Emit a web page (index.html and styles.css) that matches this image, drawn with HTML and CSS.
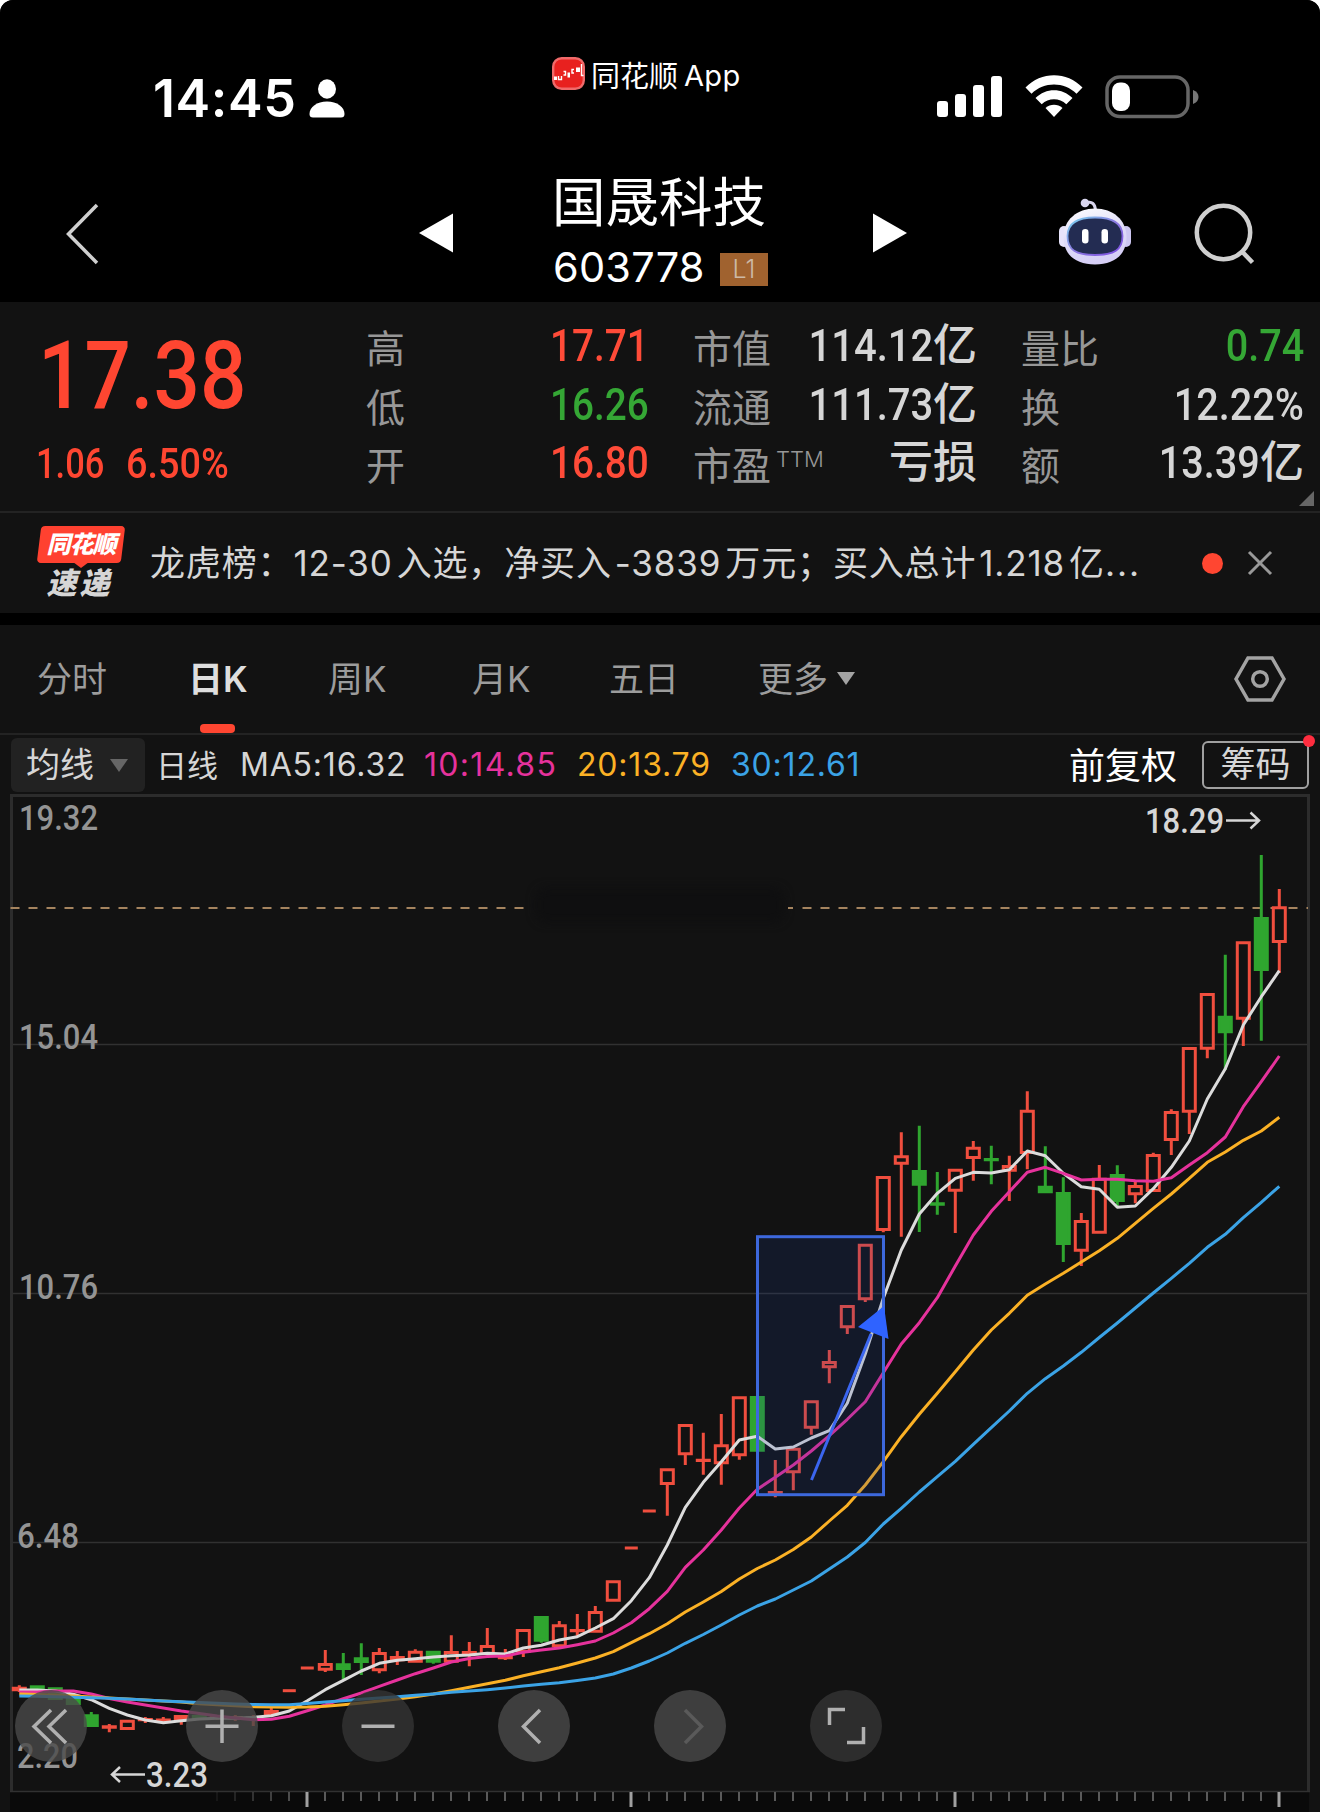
FILE: index.html
```html
<!DOCTYPE html>
<html lang="zh-CN">
<head>
    <meta charset="UTF-8">
    <meta name="viewport" content="width=device-width, initial-scale=1.0">
    <title>国晟科技 603778</title>
    <link rel="stylesheet" href="styles.css">
</head>
<body>
<div class="phone">

    <!-- 状态栏 -->
    <header class="status-bar">
        <span class="clock">14:45</span>
        <svg class="person" width="36" height="40" viewBox="0 0 36 40">
            <ellipse cx="18" cy="10" rx="9" ry="9.7"/>
            <path d="M0.5 35C0.5 28 8 22.5 18 22.5S35.5 28 35.5 35Q35.5 38.5 32 38.5H4Q0.5 38.5 0.5 35Z"/>
        </svg>
        <div class="app-tag">
            <svg width="33" height="33" viewBox="0 0 33 33">
                <rect x="1.2" y="1.2" width="30.6" height="30.6" rx="8.5" fill="#e8211f" stroke="#f06a6a" stroke-width="2.4"/>
                <path d="M2 19.5h3v3.500h-3zM15.500 15.500h2.500v5h-2.500zM24 10.500h4v4.500h-4z" fill="#fff"/>
                <path d="M6.5 19v3.500h3v-3.500M11.500 14.500h2v3.500h-2M22 12.500h-2v3.500h2M29.500 7v11.500h2" fill="none" stroke="#fff" stroke-width="1.4"/>
            </svg>
            <span class="app-cn">同花顺</span><span class="app-en">App</span>
        </div>
        <svg class="signal" width="66" height="42" viewBox="0 0 66 42">
            <rect x="0" y="25" width="11" height="16" rx="3"/>
            <rect x="18" y="18" width="11" height="23" rx="3"/>
            <rect x="36" y="9" width="11" height="32" rx="3"/>
            <rect x="54" y="0" width="11" height="41" rx="3"/>
        </svg>
        <svg class="wifi" width="58" height="43" viewBox="0 0 58 43">
            <path d="M0.5 12.5C16-4 42-4 57.5 12.5L51.5 18.8C39 6.5 19 6.5 6.5 18.8Z"/>
            <path d="M10.5 23C21 12.5 37 12.5 47.5 23L41.3 29.2C34.5 22.7 23.5 22.7 16.7 29.2Z"/>
            <path d="M20.5 33C25.5 28.6 32.5 28.6 37.5 33L29 42Z"/>
        </svg>
        <svg class="battery" width="94" height="44" viewBox="0 0 94 44">
            <rect x="2" y="2" width="81" height="39.5" rx="13" fill="none" stroke="#666" stroke-width="3.5"/>
            <path d="M88 15q5.5 2 5.5 7t-5.5 7z" fill="#777"/>
            <rect x="7" y="7.5" width="18" height="28.5" rx="8" fill="#fff"/>
        </svg>
    </header>

    <!-- 标题栏 -->
    <nav class="nav">
        <svg class="back" width="34" height="62" viewBox="0 0 34 62"><path d="M32 2L3.5 31L32 60"/></svg>
        <svg class="prev" width="34" height="40" viewBox="0 0 34 40"><path d="M0 20L34 0.5V39.5Z"/></svg>
        <div class="stock">
            <h1>国晟科技</h1>
            <div class="code"><span class="code-num">603778</span><span class="level">L1</span></div>
        </div>
        <svg class="next" width="34" height="40" viewBox="0 0 34 40"><path d="M34 20L0 0.5V39.5Z"/></svg>
        <svg class="robot" width="74" height="68" viewBox="0 0 74 68">
            <defs>
                <linearGradient id="head" x1="0" y1="0" x2="0.3" y2="1">
                    <stop offset="0" stop-color="#fff"/><stop offset="0.55" stop-color="#dfdcf8"/><stop offset="1" stop-color="#d6cff6"/>
                </linearGradient>
                <linearGradient id="rim" x1="0" y1="0" x2="1" y2="1">
                    <stop offset="0" stop-color="#79d7ef"/><stop offset="0.5" stop-color="#8a78e0"/><stop offset="1" stop-color="#7c4ce0"/>
                </linearGradient>
            </defs>
            <path d="M28 5Q37 2 37.5 13" fill="none" stroke="#d9d6ee" stroke-width="3"/>
            <circle cx="27" cy="5" r="4.3" fill="#d9d6ee"/>
            <rect x="1" y="28" width="10" height="21" rx="5" fill="#e6e3fa"/>
            <rect x="63" y="28" width="10" height="21" rx="5" fill="#cdc7f2"/>
            <path d="M37 10.5C55 10.5 68.5 22 68.5 39C68.5 57 56 66.5 37 66.5S5.5 57 5.5 39C5.5 22 19 10.5 37 10.5Z" fill="url(#head)"/>
            <path d="M37 19.5C55 19.5 64.5 25 64.5 38C64.5 52 56 57 37 57S9.5 52 9.5 38C9.5 25 19 19.5 37 19.5Z" fill="#232c52" stroke="url(#rim)" stroke-width="1.8"/>
            <rect x="24" y="31" width="6.5" height="14.5" rx="3.2" fill="#fff"/>
            <rect x="43.5" y="31" width="6.5" height="14.5" rx="3.2" fill="#fff"/>
        </svg>
        <svg class="search" width="62" height="62" viewBox="0 0 62 62"><circle cx="29.5" cy="29.5" r="26.7"/><path d="M48 48.5L58.5 59.5"/></svg>
    </nav>

    <!-- 行情 -->
    <section class="quote">
        <div class="price-box">
            <div class="price"><span class="din">17.38</span></div>
            <div class="change"><span class="din chg">1.06</span><span class="din pct">6.50%</span></div>
        </div>
        <dl class="stats stats-a">
            <dt>高</dt><dd class="up"><span class="din">17.71</span></dd>
            <dt>低</dt><dd class="down"><span class="din">16.26</span></dd>
            <dt>开</dt><dd class="up"><span class="din">16.80</span></dd>
        </dl>
        <dl class="stats stats-b">
            <dt>市值</dt><dd><span class="din">114.12</span><b>亿</b></dd>
            <dt>流通</dt><dd><span class="din">111.73</span><b>亿</b></dd>
            <dt>市盈<sup>TTM</sup></dt><dd><b>亏损</b></dd>
        </dl>
        <dl class="stats stats-c">
            <dt>量比</dt><dd class="down"><span class="din">0.74</span></dd>
            <dt>换</dt><dd><span class="din">12.22%</span></dd>
            <dt>额</dt><dd><span class="din">13.39</span><b>亿</b></dd>
        </dl>
        <i class="corner"></i>
    </section>

    <!-- 资讯条 -->
    <section class="news">
        <div class="news-logo">
            <span class="logo-top">同花顺</span>
            <span class="logo-bottom">速递</span>
        </div>
        <p class="news-text">龙虎榜：<em class="first">12-30</em>入选，净买入<em>-3839</em>万元；买入总计<em>1.218</em>亿<span class="more">...</span></p>
        <i class="dot"></i>
        <svg class="close" width="26" height="26" viewBox="0 0 26 26"><path d="M2 2L24 24M24 2L2 24"/></svg>
    </section>

    <!-- 周期切换 -->
    <section class="tabs">
        <span class="tab t1">分时</span>
        <span class="tab t2 active">日K</span>
        <span class="tab t3">周K</span>
        <span class="tab t4">月K</span>
        <span class="tab t5">五日</span>
        <span class="tab t6">更多<i class="caret"></i></span>
        <svg class="setting" width="52" height="46" viewBox="0 0 52 46">
            <path d="M14 2H38L50 23L38 44H14L2 23Z"/><circle cx="26" cy="23" r="7.3"/>
        </svg>
    </section>

    <section class="ma-row">
        <div class="ma-select">均线<i class="caret"></i></div>
        <span class="period">日线</span>
        <span class="ma ma5">MA5:16.32</span>
        <span class="ma ma10">10:14.85</span>
        <span class="ma ma20">20:13.79</span>
        <span class="ma ma30">30:12.61</span>
        <span class="adjust">前复权</span>
        <span class="chips">筹码</span>
    </section>

    <!-- K线图 -->
    <section class="chart">
        <svg id="kline" width="1320" height="1018" viewBox="0 794 1320 1018">
            <rect x="10" y="1792" width="1299" height="20" fill="#0a0a0a"/>
            <path class="grid" d="M11 1044.5H1308M11 1293.5H1308M11 1542.5H1308"/>
            <path class="frame" d="M11.5 1791V795.5H1308.5V1791"/>
            <path class="grid base" d="M10 1791.5H1310"/>
            <rect class="smudge" x="536" y="888" width="248" height="34" rx="10"/>
            <path class="last-price" d="M10.5 908H528"/>
            <path class="last-price" d="M788 908H793M802.5 908H1308"/>
            <g id="candles"></g>
            <g id="averages"></g>
            <g id="ticks"></g>
            <g class="axis">
                <text x="19" y="830" textLength="79">19.32</text>
                <text x="19" y="1049" textLength="79">15.04</text>
                <text x="19" y="1299" textLength="79">10.76</text>
                <text x="17" y="1548" textLength="62">6.48</text>
                <text x="17" y="1767.5" textLength="61">2.20</text>
            </g>
            <g class="mark">
                <text x="1145" y="833" textLength="79">18.29</text>
                <path d="M1226 820.5H1259M1250.5 812.5L1259 820.5L1250.5 828.5"/>
                <text x="146" y="1787" textLength="62">3.23</text>
                <path d="M145 1774.5H112M120 1767L112 1774.5L120 1782"/>
            </g>
            <rect class="pick" x="757.5" y="1236.7" width="126" height="258"/>
            <path class="pick-line" d="M811.5 1480L871 1334"/>
            <path class="pick-head" d="M884 1306L858 1327L888.5 1339Z"/>
        </svg>

        <div class="controls">
            <button><svg viewBox="0 0 72 72"><path d="M36 20L19 36.5L36 53M51 20L34 36.5L51 53"/></svg></button>
            <button><svg viewBox="0 0 72 72"><path d="M36 19.5V53M19.5 36.2H52.5"/></svg></button>
            <button class="dim"><svg viewBox="0 0 72 72"><path d="M19.5 36.2H52.5"/></svg></button>
            <button><svg viewBox="0 0 72 72"><path d="M42 20L25.5 36.5L42 53"/></svg></button>
            <button class="off"><svg viewBox="0 0 72 72"><path d="M31 20L47.5 36.5L31 53"/></svg></button>
            <button class="dim"><svg viewBox="0 0 72 72"><path d="M19.5 35V19.5H35M53.5 37V52.5H37"/></svg></button>
        </div>
    </section>
</div>
<script src="kline.js"></script>
</body>
</html>
```
FILE: styles.css
```css
* {
    box-sizing: border-box;
}
body {
    margin: 0;
    background: #fff;
    font-family: Inter, "Noto Sans CJK SC", sans-serif;
    color: #d6d6d6;
}
.phone {
    width: 1320px;
    height: 1812px;
    background: #121212;
    border-radius: 13px 13px 0 0;
    overflow: hidden;
}
i, em {
    font-style: normal;
}
svg {
    display: block;
    flex: none;
}

/* status bar */
.status-bar {
    display: flex;
    align-items: flex-start;
    height: 160px;
    background: #000;
    color: #fff;
    fill: #fff;
}
.clock {
    width: 156px;
    margin: 67px 0 0 153px;
    font-size: 52px;
    line-height: 64px;
    font-weight: 600;
    letter-spacing: 0.6px;
}
.person {
    margin-top: 79px;
}
.app-tag {
    display: flex;
    align-items: center;
    width: 385px;
    margin: 57px 0 0 207px;
    height: 33px;
    white-space: nowrap;
}
.app-cn {
    margin: 1px 0 0 6px;
    font-size: 29px;
}
.app-en {
    margin: 4px 0 0 6px;
    font-size: 29px;
    letter-spacing: 0.3px;
}
.signal {
    margin-top: 76px;
}
.wifi {
    margin: 75px 0 0 22px;
}
.battery {
    margin: 75px 0 0 22px;
}

/* nav */
.nav {
    display: flex;
    align-items: flex-start;
    height: 142px;
    background: #000;
    color: #fff;
    fill: #fff;
}
.back {
    margin: 43px 0 0 65px;
    fill: none;
    stroke: #cfcfcf;
    stroke-width: 3.5;
}
.prev {
    margin: 53px 0 0 320px;
}
.stock {
    width: 221px;
    margin-left: 99px;
}
.stock h1 {
    margin: 6px 0 0;
    font-size: 53.5px;
    line-height: 74px;
    font-weight: 400;
    white-space: nowrap;
}
.code {
    display: flex;
    align-items: center;
    height: 50px;
    margin-top: 2px;
}
.code-num {
    width: 167px;
    margin-left: 1px;
    font-size: 41.5px;
    line-height: 50px;
    letter-spacing: 0.2px;
}
.level {
    width: 48px;
    height: 33px;
    margin-top: 4px;
    background: #a0622f;
    color: #cdb9a6;
    font-size: 25px;
    line-height: 33px;
    text-align: center;
    font-weight: 300;
}
.next {
    margin: 53px 0 0 100px;
}
.robot {
    margin: 38px 0 0 151px;
}
.search {
    margin: 43px 0 0 62px;
    fill: none;
    stroke: #cfcfcf;
    stroke-width: 4.5;
}

/* quote */
.quote {
    position: relative;
    display: flex;
    height: 211px;
    border-bottom: 2px solid #232323;
}
.din {
    display: inline-block;
    font-family: Roboto, sans-serif;
    font-weight: 500;
    transform: scaleX(0.86);
    transform-origin: 100% 50%;
}
.price-box {
    width: 366px;
    color: #ff4631;
}
.price-box .din {
    transform-origin: 0 50%;
}
.price {
    margin: 16px 0 0 38px;
    font-size: 95px;
    line-height: 112px;
}
.change {
    display: flex;
    margin: 7px 0 0 36px;
    font-size: 42px;
    line-height: 50px;
}
.change .chg {
    width: 90px;
    transform: scaleX(0.82);
}
.change .pct {
    transform: scaleX(0.9);
}
.stats {
    display: grid;
    grid-template-columns: 90px 1fr;
    grid-auto-rows: 58.5px;
    margin: 17px 0 0;
    line-height: 58px;
}
.stats-a {
    width: 283px;
}
.stats-b {
    width: 284px;
    margin-left: 44px;
}
.stats-b .din {
    transform: scaleX(0.89);
}
.stats-c {
    width: 283px;
    margin-left: 44px;
}
.stats-c .din {
    transform: scaleX(0.88);
}
dt {
    padding-top: 1px;
    color: #979797;
    font-size: 39px;
    white-space: nowrap;
    font-weight: 400;
}
dt sup {
    font-size: 22px;
    font-weight: 300;
    line-height: 1;
    margin-left: 5px;
    vertical-align: 13px;
}
dd {
    margin: -3px 0 0;
    font-size: 45px;
    text-align: right;
    white-space: nowrap;
}
dd b {
    font-size: 44px;
    font-weight: 500;
    line-height: 1;
}
.up {
    color: #ff4b38;
}
.down {
    color: #35a735;
}
.corner {
    position: absolute;
    right: 6px;
    bottom: 5px;
    border-left: 15px solid transparent;
    border-bottom: 15px solid #666;
}

/* news */
.news {
    display: flex;
    align-items: center;
    height: 112px;
    border-bottom: 12px solid #000;
}
.news-logo {
    display: flex;
    flex-direction: column;
    align-items: center;
    width: 88px;
    margin: 0 0 1px 37px;
    font-style: italic;
    font-weight: 900;
    white-space: nowrap;
}
.logo-top {
    position: relative;
    z-index: 0;
    width: 88px;
    height: 37px;
    font-size: 24px;
    line-height: 38px;
    text-align: center;
    color: #fff;
    letter-spacing: -1px;
}
.logo-top::before {
    content: "";
    position: absolute;
    z-index: -1;
    inset: 0 2px;
    background: #ff4130;
    border-radius: 4px;
    transform: skewX(-7deg);
}
.logo-top::after {
    content: "";
    position: absolute;
    left: 36px;
    top: 36px;
    border: 8px solid transparent;
    border-top: 6px solid #ff4130;
    border-bottom: 0;
}
.logo-bottom {
    margin: 4px 3px 0 0;
    font-size: 30px;
    line-height: 32px;
    letter-spacing: 3px;
}
.news-text {
    width: 1052px;
    margin: 0 0 0 25px;
    font-size: 35px;
    line-height: 50px;
    letter-spacing: 0.85px;
    white-space: nowrap;
}
.news-text em {
    margin: 0 4px 0 3px;
}
.news-text .first {
    margin-left: 0;
}
.news-text .more {
    letter-spacing: 2px;
}
.dot {
    width: 21px;
    height: 21px;
    border-radius: 50%;
    background: #ff4631;
}
.close {
    margin-left: 24px;
    stroke: #999;
    stroke-width: 3;
}

/* tabs */
.tabs {
    display: flex;
    align-items: center;
    height: 110px;
    border-bottom: 2px solid #232323;
    font-size: 35px;
    color: #9c9c9c;
}
.tab {
    position: relative;
    display: flex;
    align-items: center;
    height: 108px;
    padding-bottom: 6px;
    white-space: nowrap;
}
.t1 { width: 151px; margin-left: 37px; }
.t2 { width: 140px; }
.t3 { width: 144px; }
.t4 { width: 137px; }
.t5 { width: 149px; }
.t6 { width: 476px; }
.tab.active {
    color: #dedede;
    font-weight: 600;
}
.tab.active::after {
    content: "";
    position: absolute;
    left: 12px;
    bottom: 0;
    width: 35px;
    height: 9px;
    border-radius: 4px;
    background: #ff4631;
}
.caret {
    width: 0;
    height: 0;
    border: 9px solid transparent;
    border-top: 13px solid #a3a3a3;
    border-bottom: 0;
}
.tab .caret {
    margin: 5px 0 0 9px;
}
.setting {
    fill: none;
    stroke: #a3a3a3;
    stroke-width: 3.5;
}

/* MA row */
.ma-row {
    display: flex;
    align-items: center;
    height: 59px;
    font-size: 32px;
    white-space: nowrap;
}
.ma-select {
    display: flex;
    align-items: center;
    width: 134px;
    height: 54px;
    margin-left: 11px;
    padding-left: 15px;
    border-radius: 6px;
    background: #222;
    font-size: 34px;
    line-height: 52px;
}
.ma-select .caret {
    margin: 1px 0 0 16px;
    border-top-color: #666;
}
.period {
    width: 84px;
    margin: -3px 0 0 11px;
    font-size: 31px;
}
.ma {
    letter-spacing: 0.8px;
}
.ma5 { width: 184px; }
.ma10 { width: 153px; color: #e6329c; letter-spacing: 1.3px; }
.ma20 { width: 154px; color: #fbb125; }
.ma30 { width: 338px; color: #3ba3e6; }
.adjust {
    width: 133px;
    margin-top: -4px;
    font-size: 36px;
    color: #fff;
}
.chips {
    position: relative;
    width: 107px;
    height: 48px;
    border: 2px solid #a0a0a0;
    border-radius: 6px;
    font-size: 35px;
    line-height: 43px;
    text-align: center;
}
.chips::after {
    content: "";
    position: absolute;
    right: -8px;
    top: -8px;
    width: 12px;
    height: 12px;
    border-radius: 50%;
    background: #ff2d3f;
}

/* chart */
.chart {
    position: relative;
    height: 1018px;
}
.grid {
    stroke: #313131;
    stroke-width: 1.5;
}
.frame {
    fill: none;
    stroke: #2c2c2c;
    stroke-width: 3;
}
.smudge {
    fill: #0f0f10;
    filter: blur(5px);
}
.last-price {
    stroke: #a5845f;
    stroke-width: 2.2;
    stroke-dasharray: 9 9;
}
.candle-up {
    fill: none;
    stroke: #f04e3e;
    stroke-width: 3;
}
.candle-down {
    fill: #2fa52f;
    stroke: #2fa52f;
    stroke-width: 3;
}
.average {
    fill: none;
    stroke-width: 3;
    stroke-linejoin: round;
}
.tick {
    stroke: #5a5a5a;
    stroke-width: 2;
}
.tick-major {
    stroke: #a0a0a0;
    stroke-width: 3;
}
.axis text,
.mark text {
    font-family: Roboto, sans-serif;
    font-size: 35.5px;
    font-weight: 500;
    fill: #949494;
}
.mark text {
    fill: #d6d6d6;
}
.mark path {
    fill: none;
    stroke: #d6d6d6;
    stroke-width: 2.5;
}
.pick {
    fill: rgba(30, 65, 160, 0.17);
    stroke: #3d68dc;
    stroke-width: 3;
}
.pick-line {
    stroke: #3b66f0;
    stroke-width: 3;
}
.pick-head {
    fill: #2f63ff;
}
.controls {
    position: absolute;
    left: 15px;
    top: 896px;
    display: flex;
    gap: 84px;
}
.controls button {
    width: 72px;
    height: 72px;
    padding: 0;
    border: 0;
    border-radius: 50%;
    background: rgba(74, 74, 74, 0.8);
}
.controls button:first-child {
    margin-right: 15px;
}
.controls .dim {
    background: rgba(52, 52, 52, 0.8);
}
.controls path {
    fill: none;
    stroke: #b0b0b0;
    stroke-width: 3.5;
}
.controls .off path {
    stroke: #5a5a5a;
}
```
FILE: kline.js
```js
const STEP = 18;
const FIRST_X = 19.3;
const NS = 'http://www.w3.org/2000/svg';

// [方向, 最高, 实体上沿, 实体下沿, 最低]，方向 1 涨 / 0 跌 / 2 一字板
const candles = [
    [1, 1685.3, 1686.7, 1691.3, 1692], [0, 1685.3, 1685.3, 1689.5, 1689.5], [0, 1687.3, 1687.3, 1700, 1700],
    [0, 1698, 1698, 1705, 1705], [0, 1712, 1714.3, 1727, 1727], [1, 1724, 1725.3, 1728.7, 1732.3],
    [1, 1719.7, 1719.7, 1730, 1730], [1, 1717, 1718, 1721, 1723], [1, 1717, 1718.5, 1722, 1723],
    [1, 1715, 1715, 1720, 1724.7], [0, 1714, 1715, 1719, 1720], [1, 1715, 1716, 1719, 1720],
    [1, 1715, 1716, 1719, 1721], [1, 1715, 1716, 1720, 1726], [1, 1706, 1710, 1715.3, 1716],
    [2, 0, 1690.7], [2, 0, 1668], [1, 1650, 1663, 1670.7, 1672],
    [0, 1653, 1663.3, 1670, 1679.3], [0, 1643.3, 1657.3, 1663, 1675], [1, 1648, 1652, 1671.3, 1673.3],
    [1, 1651, 1656, 1661.3, 1665], [1, 1649.3, 1650.7, 1662.7, 1662.7], [0, 1650.7, 1650.7, 1662.7, 1663.7],
    [1, 1635.3, 1651, 1662.7, 1662.7], [1, 1642, 1651, 1654.3, 1666.3], [1, 1628, 1645, 1655, 1655],
    [1, 1649, 1656, 1659, 1660], [1, 1629, 1629, 1652.7, 1657], [0, 1616, 1616, 1641.7, 1642.7],
    [1, 1621, 1624.3, 1647.3, 1649], [1, 1614, 1629, 1632.3, 1636.7], [1, 1606, 1611, 1632.7, 1632.7],
    [1, 1580.3, 1580.3, 1601.7, 1601.7], [2, 0, 1548], [2, 0, 1511],
    [1, 1468.3, 1468.3, 1485, 1515.7], [1, 1424, 1424, 1455.3, 1465], [1, 1432.7, 1458.7, 1462, 1474.7],
    [1, 1414, 1444.3, 1464.3, 1484.7], [1, 1396.3, 1396.3, 1456.3, 1459.7], [0, 1396, 1396, 1451.7, 1451.7],
    [1, 1460, 1491, 1495.3, 1497.3], [1, 1447.7, 1447.7, 1473.3, 1490.3], [1, 1400.3, 1400.3, 1428.7, 1434.7],
    [1, 1350, 1361, 1368.3, 1383.3], [1, 1305, 1305, 1328.3, 1334], [1, 1243.7, 1243.7, 1300.3, 1302],
    [1, 1176, 1176, 1231, 1232.3], [1, 1132.3, 1155.3, 1164.7, 1236.7], [0, 1125.7, 1170, 1185.7, 1232],
    [0, 1172, 1202.3, 1205.7, 1214.7], [1, 1168.7, 1168.7, 1191.7, 1233], [1, 1141, 1146.7, 1159, 1180.7],
    [0, 1145.7, 1158, 1161, 1184.3], [1, 1155.7, 1165, 1171.7, 1201], [1, 1091.3, 1109.7, 1154, 1169.3],
    [0, 1146.3, 1185.7, 1193.3, 1193.3], [0, 1177.3, 1192, 1245, 1262], [1, 1213, 1220, 1251.7, 1266],
    [1, 1165, 1177.7, 1233.7, 1233.7], [0, 1165.3, 1174, 1202, 1206], [1, 1181.3, 1185, 1195.3, 1203.3],
    [1, 1152.7, 1154, 1192, 1192], [1, 1109.3, 1111, 1141, 1155], [1, 1047, 1047, 1112.7, 1134],
    [1, 993, 993, 1049.7, 1058.3], [0, 954.7, 1015.7, 1033.3, 1070], [1, 941.3, 941.3, 1019.7, 1046],
    [0, 855, 917, 971, 1040.7], [1, 889, 906.3, 943, 973]
];

const averages = {
    '#dcdcdc': [
        1690, 1690, 1691, 1694.3, 1699.7, 1708.3, 1715, 1720, 1722.7, 1720.7, 1719, 1718.3, 1718.3, 1717.3, 1715.7,
        1711, 1700.7, 1689.7, 1680.3, 1671, 1663.3, 1660.3, 1658.7, 1657, 1655.7, 1655, 1653.3, 1654, 1648, 1645.3,
        1640, 1636.7, 1628, 1618.7, 1600.7, 1577.7, 1545, 1507.3, 1482.3, 1461.7, 1440, 1436.3, 1449, 1447, 1438,
        1430.7, 1403.3, 1354, 1298.3, 1250, 1214, 1193.3, 1178.3, 1172.3, 1173, 1169.7, 1151, 1155.7, 1173.3, 1186.7,
        1189.3, 1207.3, 1206, 1188.7, 1167.3, 1141, 1099, 1068.7, 1025, 996.7, 970.7
    ],
    '#e6329c': [
        1692, 1692, 1691, 1691, 1694, 1698.5, 1702, 1705, 1708, 1711, 1713.5, 1716, 1718, 1719.7, 1719.3,
        1716.3, 1710.7, 1705, 1698.7, 1693, 1686.3, 1680, 1673.7, 1668, 1662, 1658.5, 1656.5, 1656, 1652.3, 1650,
        1648, 1644.7, 1641, 1633, 1622.7, 1608.7, 1591.3, 1567.3, 1550, 1530, 1508, 1489.3, 1477.3, 1465, 1451,
        1435.7, 1419.3, 1401.7, 1372.7, 1344, 1322.7, 1297.7, 1266, 1235, 1211.3, 1191.7, 1172.3, 1167.3, 1173.3, 1180,
        1179.3, 1179.3, 1180.7, 1181.3, 1177.7, 1165, 1152.7, 1137, 1106.7, 1081.7, 1056
    ],
    '#fbb125': [
        1694, 1694.5, 1695, 1696, 1697, 1698, 1699, 1700, 1701, 1702, 1703.7, 1704.7, 1705.7, 1706.7, 1707,
        1707.3, 1707, 1706.3, 1704.7, 1703, 1701, 1699, 1696.7, 1694, 1690.7, 1687.3, 1683.7, 1680.3, 1675.7, 1671.7,
        1667.7, 1663, 1658, 1651.7, 1642.7, 1633.7, 1623.7, 1612, 1602, 1591.5, 1579, 1568.5, 1560, 1549.5, 1537,
        1521, 1505.3, 1485, 1461.7, 1436.7, 1414.3, 1393.3, 1371.7, 1350, 1330, 1313.3, 1295.3, 1284, 1273.3, 1262,
        1250.7, 1238.3, 1223.3, 1208.3, 1194, 1178.3, 1162.3, 1152, 1140.3, 1131, 1117.3
    ],
    '#3ba3e6': [
        1696, 1696.3, 1696.7, 1697.2, 1697.8, 1698.3, 1699, 1700, 1701, 1701.7, 1702.5, 1703.3, 1704, 1704.4, 1704.7,
        1704.7, 1703.5, 1702, 1700.7, 1699.3, 1698, 1696.7, 1695.3, 1694, 1692.3, 1691, 1689.7, 1688, 1686, 1684.3,
        1682.7, 1680.5, 1678, 1674, 1668, 1661, 1653, 1643.3, 1634.5, 1625, 1615, 1606, 1599, 1590, 1581,
        1569, 1557, 1542.5, 1524, 1508.3, 1492, 1476.7, 1461.3, 1444.3, 1427.7, 1411, 1393.3, 1378.7, 1366, 1352.3,
        1337.5, 1323, 1308, 1293, 1278.3, 1263.3, 1247.3, 1234.3, 1217.7, 1202.3, 1186.3
    ]
};

function addPath(parent, d, className) {
    const path = document.createElementNS(NS, 'path');
    path.setAttribute('d', d);
    path.setAttribute('class', className);
    document.getElementById(parent).appendChild(path);
    return path;
}

candles.forEach(([dir, high, top, bottom, low], i) => {
    const x = FIRST_X + i * STEP;
    if (dir === 2) {
        addPath('candles', `M${x - 6.5} ${top}H${x + 6.5}`, 'candle-up');
        return;
    }
    const t = top + 1.5;
    const b = Math.max(bottom - 1.5, t + 0.2);
    let d = `M${x - 6} ${t}H${x + 6}V${b}H${x - 6}Z`;
    if (high < top) d += `M${x} ${high}V${t}`;
    if (low > bottom) d += `M${x} ${b}V${low}`;
    addPath('candles', d, dir ? 'candle-up' : 'candle-down');
});

Object.keys(averages).forEach(color => {
    const points = averages[color].map((y, i) => `${FIRST_X + i * STEP} ${y}`);
    addPath('averages', 'M' + points.join('L'), 'average').style.stroke = color;
});

// 时间刻度，每 18 根一个长刻度
for (let i = 11; i <= 70; i++) {
    const major = (70 - i) % 18 === 0;
    const x = FIRST_X + i * STEP - 0.3;
    const tick = addPath('ticks', `M${x} 1792V${major ? 1807 : 1801}`, major ? 'tick-major' : 'tick');
    if (i < 16) tick.style.opacity = (i - 10) / 6;
}

document.querySelectorAll('#kline text').forEach(t => t.setAttribute('lengthAdjust', 'spacingAndGlyphs'));
```
